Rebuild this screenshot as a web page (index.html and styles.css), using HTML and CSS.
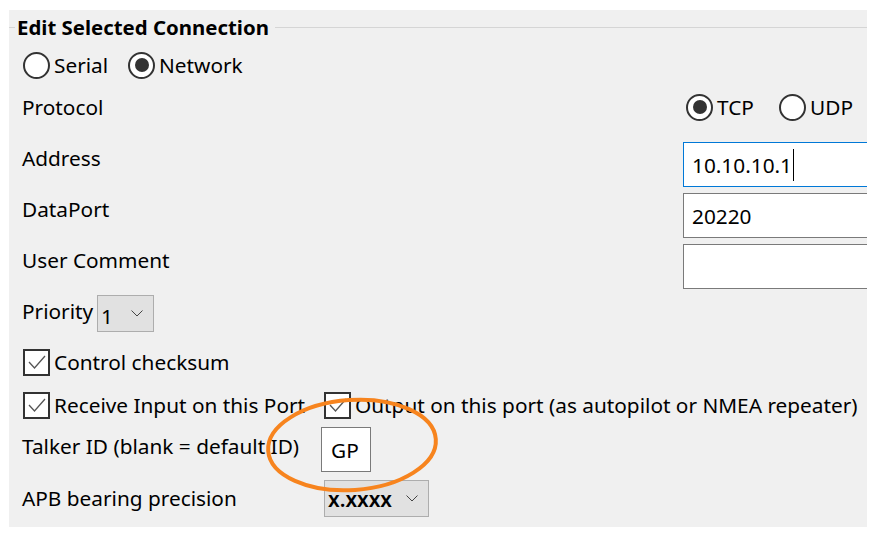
FILE: index.html
```html
<!DOCTYPE html>
<html>
<head>
<meta charset="utf-8">
<link rel="stylesheet" href="styles.css">
</head>
<body>
<div class="panel">
  <div class="title-row">
    <span class="line-left"></span>
    <span class="title">Edit Selected Connection</span>
    <span class="line-right"></span>
  </div>
  <div class="row radios">
    <span class="radio"></span><span class="rlabel serial">Serial</span>
    <span class="radio on"></span><span class="rlabel">Network</span>
  </div>
  <div class="row grid2 proto">
    <span class="label">Protocol</span>
    <div class="right-radios">
      <span class="radio on"></span><span class="rlabel tcp">TCP</span>
      <span class="radio"></span><span class="rlabel">UDP</span>
    </div>
  </div>
  <div class="row grid2 inrow">
    <span class="label">Address</span>
    <div class="input focus">10.10.10.1<span class="caret"></span></div>
  </div>
  <div class="row grid2 inrow">
    <span class="label">DataPort</span>
    <div class="input">20220</div>
  </div>
  <div class="row grid2 inrow">
    <span class="label">User Comment</span>
    <div class="input"></div>
  </div>
  <div class="row prio">
    <span class="label">Priority</span>
    <div class="select small"><span>1</span><svg class="chev" width="12" height="7" viewBox="0 0 12 7"><path d="M0.5 0.5 L6 6 L11.5 0.5" fill="none" stroke="#444" stroke-width="1"/></svg></div>
  </div>
  <div class="row check-row cc">
    <span class="check"><svg width="22" height="22" viewBox="0 0 22 22"><path d="M3 11 L8.5 17 L19 5" fill="none" stroke="#555" stroke-width="1.3"/></svg></span>
    <span class="clabel">Control checksum</span>
  </div>
  <div class="row check-row rc">
    <span class="check"><svg width="22" height="22" viewBox="0 0 22 22"><path d="M3 11 L8.5 17 L19 5" fill="none" stroke="#555" stroke-width="1.3"/></svg></span>
    <span class="clabel first">Receive Input on this Port</span>
    <span class="check"><svg width="22" height="22" viewBox="0 0 22 22"><path d="M3 11 L8.5 17 L19 5" fill="none" stroke="#555" stroke-width="1.3"/></svg></span>
    <span class="clabel out">Output on this port (as autopilot or NMEA repeater)</span>
  </div>
  <div class="row talker">
    <span class="label tl">Talker ID (blank = default ID)</span>
    <div class="input tinput">GP</div>
  </div>
  <div class="row apb">
    <span class="label al">APB bearing precision</span>
    <div class="select wide"><span class="bold">x.xxxx</span><svg class="chev" width="12" height="7" viewBox="0 0 12 7"><path d="M0.5 0.5 L6 6 L11.5 0.5" fill="none" stroke="#444" stroke-width="1"/></svg></div>
  </div>
  <svg class="ellipse" width="190" height="110" viewBox="0 0 190 110">
    <ellipse cx="94" cy="55" rx="84" ry="45" fill="none" stroke="#f7841e" stroke-width="4" transform="rotate(-4 94 55)"/>
  </svg>
</div>
</body>
</html>
```
FILE: styles.css
```css
html, body {
  margin: 0;
  padding: 0;
  background: #ffffff;
}
body {
  font-family: "Noto Sans", "Open Sans", sans-serif;
  font-size: 20.8px;
  color: #000;
}
.panel {
  position: relative;
  margin: 10px 0 0 9px;
  width: 858px;
  height: 517px;
  background: #f0f0f0;
  overflow: hidden;
}
.title-row {
  display: flex;
  align-items: center;
  height: 34px;
}
.line-left {
  width: 6px;
  border-top: 1px solid #d5d5d5;
}
.line-right {
  flex: 1;
  border-top: 1px solid #d5d5d5;
  margin-left: 6px;
}
.title {
  font-weight: 700;
  font-size: 20.4px;
  padding-left: 2px;
  line-height: 34px;
}
.row {
  display: flex;
  align-items: center;
  padding-left: 13px;
}
.radios { height: 42px; padding-left: 14px; }
.radio {
  box-sizing: border-box;
  width: 27px;
  height: 27px;
  flex: none;
  border: 2px solid #333;
  border-radius: 50%;
  background: #fff;
  display: flex;
  align-items: center;
  justify-content: center;
}
.radio.on::after {
  content: "";
  width: 14px;
  height: 14px;
  border-radius: 50%;
  background: #333;
}
.rlabel { margin-left: 4px; line-height: 26px; }
.rlabel.serial { width: 74px; }
.rlabel.tcp { width: 62px; }
.grid2 {
  display: grid;
  grid-template-columns: 661px 1fr;
}
.proto { height: 42px; margin-bottom: 14px; align-items: center; }
.right-radios {
  display: flex;
  align-items: center;
  padding-left: 3px;
}
.label { line-height: 26px; }
.inrow {
  height: 51px;
  align-items: start;
}
.inrow .label { padding-top: 3px; }
.input {
  box-sizing: border-box;
  height: 45px;
  width: 220px;
  background: #fff;
  border: 1px solid #7a7a7a;
  padding-left: 8px;
  display: flex;
  align-items: center;
}
.input.focus { border-color: #0078d7; }
.caret {
  display: inline-block;
  width: 0;
  height: 32px;
  border-left: 1px solid #000;
  margin-left: 1px;
}
.prio {
  height: 46px;
  align-items: start;
}
.prio .label { padding-top: 3px; width: 75px; }
.select {
  box-sizing: border-box;
  height: 37px;
  background: #e1e1e1;
  border: 1px solid #adadad;
  display: flex;
  align-items: center;
  justify-content: space-between;
  padding: 0 10px 0 3px;
}
.select.small { width: 57px; }
.select.small span { padding-top: 4px; }
.select.wide { width: 105px; }
.bold { font-weight: 600; }
.check {
  box-sizing: border-box;
  width: 27px;
  height: 27px;
  flex: none;
  border: 2px solid #333;
  background: #fff;
  display: flex;
  align-items: center;
  justify-content: center;
  margin-left: 1px;
}
.clabel { margin-left: 4px; line-height: 26px; white-space: nowrap; }
.clabel.first { width: 269px; }
.cc { height: 42px; }
.rc { height: 44px; }
.talker {
  height: 51px;
  align-items: start;
}
.tl { padding-top: 6px; width: 299px; white-space: nowrap; }
.tinput {
  width: 50px;
  padding-left: 9px;
}
.apb {
  height: 49px;
  align-items: start;
  padding-top: 2px;
  box-sizing: border-box;
}
.al { padding-top: 5px; width: 302px; }
.ellipse {
  position: absolute;
  left: 249px;
  top: 380px;
}
```
